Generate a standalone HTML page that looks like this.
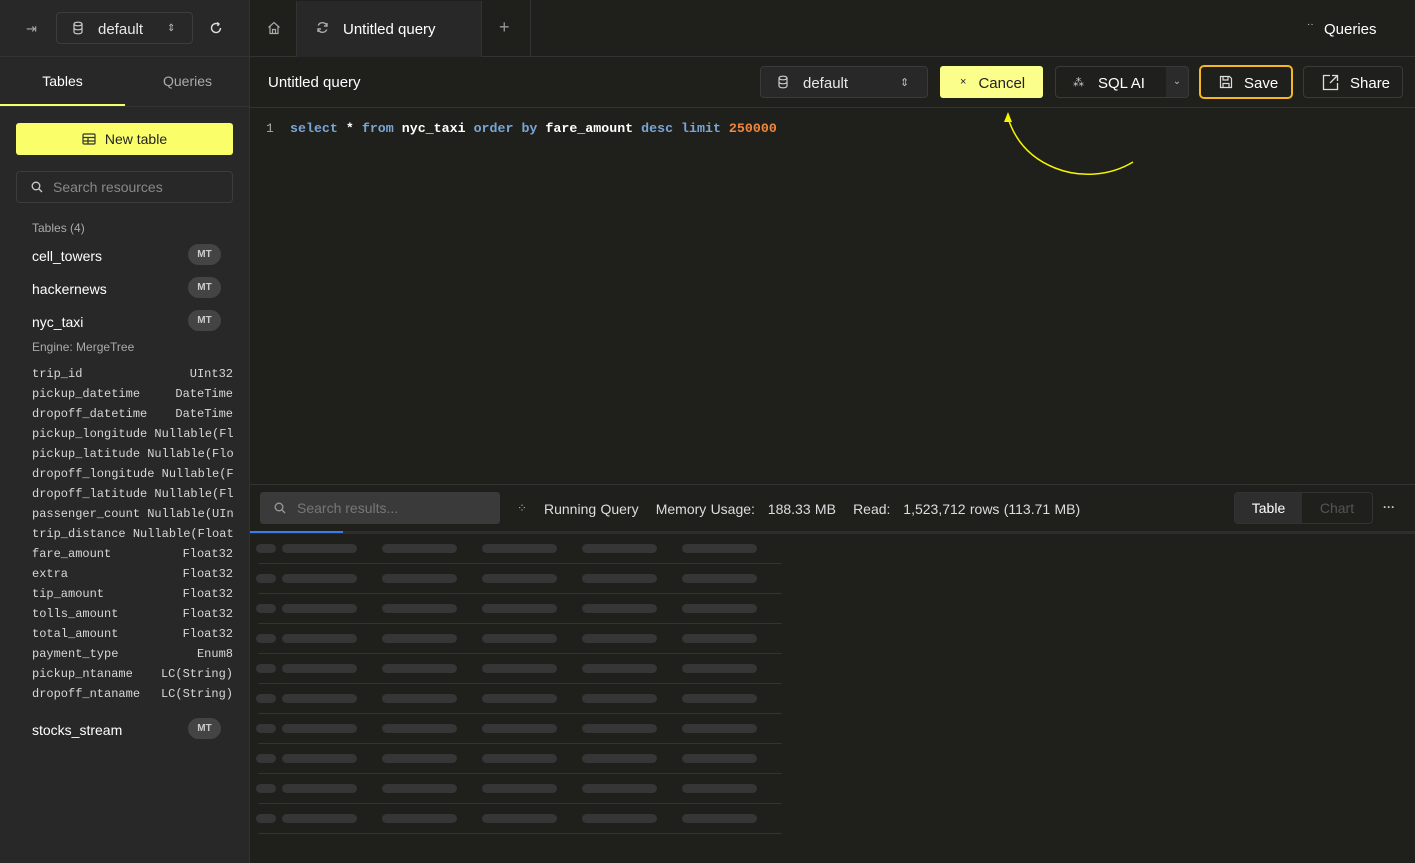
<!DOCTYPE html>
<html><head><meta charset="utf-8"><style>
*{box-sizing:border-box;margin:0;padding:0}
body{width:1415px;height:863px;background:#1f1f1c;font-family:"Liberation Sans",sans-serif;color:#e8e8e8;position:relative;overflow:hidden;font-size:14px}
.abs{position:absolute}
.side{left:0;top:0;width:250px;height:863px;background:#282828;border-right:1px solid #333}
.mono{font-family:"Liberation Mono",monospace}
.btn{position:absolute;border:1px solid #3a3a3a;border-radius:4px;display:flex;align-items:center;font-size:14px}
.badge{position:absolute;left:188px;width:33px;height:21px;border-radius:11px;background:#444;color:#ccc;font-size:10px;font-weight:bold;text-align:center;line-height:21px}
.col{position:absolute;left:32px;width:201px;font-size:12px;color:#d8d8d8;display:flex;justify-content:space-between;white-space:nowrap;overflow:hidden}
.sk{position:absolute;height:9px;border-radius:5px;background:#363636}
.sep{position:absolute;left:258px;width:524px;height:1px;background:#333}
</style></head><body>
<div class="abs side">
  <div class="abs" style="left:26px;top:21px;color:#aaa;font-size:13px">⇥</div>
  <div class="btn" style="left:56px;top:12px;width:137px;height:32px;border-color:#3c3c3c">
    <svg style="margin-left:15px" width="12" height="14" viewBox="0 0 12 14" fill="none" stroke="#ccc" stroke-width="1.2"><ellipse cx="6" cy="3" rx="4" ry="1.8"/><path d="M2 3v8c0 1 1.8 1.8 4 1.8s4-.8 4-1.8V3M2 7c0 1 1.8 1.8 4 1.8s4-.8 4-1.8"/></svg>
    <span style="margin-left:14px;color:#e8e8e8;font-size:15px;position:relative;top:1px">default</span>
    <span style="margin-left:24px;color:#bbb;font-size:10px">⇕</span>
  </div>
  <svg class="abs" style="left:209px;top:21px" width="14" height="14" viewBox="0 0 14 14" fill="none" stroke="#ddd" stroke-width="1.4"><path d="M11.5 7A4.5 4.5 0 1 1 9 3"/><path d="M8 1.5l2 1.5-1.5 2"/></svg>
  <div class="abs" style="left:0;top:56px;width:250px;height:1px;background:#333"></div>
  <div class="abs" style="left:0;top:73px;width:125px;text-align:center;font-size:14px;color:#fff">Tables</div>
  <div class="abs" style="left:125px;top:73px;width:125px;text-align:center;font-size:14px;color:#aaa">Queries</div>
  <div class="abs" style="left:0;top:104px;width:125px;height:2px;background:#faff69"></div>
  <div class="abs" style="left:0;top:106px;width:250px;height:1px;background:#333"></div>
  <div class="abs" style="left:16px;top:123px;width:217px;height:32px;background:#faff69;border-radius:3px;color:#222;display:flex;align-items:center;justify-content:center;font-size:14px">
    <svg width="14" height="12" viewBox="0 0 14 12" fill="none" stroke="#333" stroke-width="1.2" style="margin-right:9px"><rect x="1" y="1" width="12" height="10" rx="1"/><path d="M1 4.5h12M1 8h12M6 4.5V11"/></svg>New table</div>
  <div class="btn" style="left:16px;top:171px;width:217px;height:32px;border-color:#3c3c3c">
    <svg style="margin-left:14px" width="12" height="12" viewBox="0 0 12 12" fill="none" stroke="#ccc" stroke-width="1.3"><circle cx="5" cy="5" r="3.8"/><path d="M8 8l3 3"/></svg>
    <span style="margin-left:10px;color:#888">Search resources</span></div>
  <div class="abs" style="left:32px;top:221px;font-size:12px;color:#aaa">Tables (4)</div>
  <div class="abs" style="left:32px;top:248px;font-size:14px;color:#fff">cell_towers</div><div class="badge" style="top:244px">MT</div>
  <div class="abs" style="left:32px;top:281px;font-size:14px;color:#fff">hackernews</div><div class="badge" style="top:277px">MT</div>
  <div class="abs" style="left:32px;top:314px;font-size:14px;color:#fff">nyc_taxi</div><div class="badge" style="top:310px">MT</div>
  <div class="abs" style="left:32px;top:340px;font-size:12px;color:#aaa">Engine: MergeTree</div>
  <div class="mono">
  <div class="col" style="top:367px"><span>trip_id</span><span>UInt32</span></div>
  <div class="col" style="top:387px"><span>pickup_datetime</span><span>DateTime</span></div>
  <div class="col" style="top:407px"><span>dropoff_datetime</span><span>DateTime</span></div>
  <div class="col" style="top:427px"><span>pickup_longitude</span><span>&nbsp;Nullable(Fl</span></div>
  <div class="col" style="top:447px"><span>pickup_latitude</span><span>&nbsp;Nullable(Flo</span></div>
  <div class="col" style="top:467px"><span>dropoff_longitude</span><span>&nbsp;Nullable(F</span></div>
  <div class="col" style="top:487px"><span>dropoff_latitude</span><span>&nbsp;Nullable(Fl</span></div>
  <div class="col" style="top:507px"><span>passenger_count</span><span>&nbsp;Nullable(UIn</span></div>
  <div class="col" style="top:527px"><span>trip_distance</span><span>&nbsp;Nullable(Float</span></div>
  <div class="col" style="top:547px"><span>fare_amount</span><span>Float32</span></div>
  <div class="col" style="top:567px"><span>extra</span><span>Float32</span></div>
  <div class="col" style="top:587px"><span>tip_amount</span><span>Float32</span></div>
  <div class="col" style="top:607px"><span>tolls_amount</span><span>Float32</span></div>
  <div class="col" style="top:627px"><span>total_amount</span><span>Float32</span></div>
  <div class="col" style="top:647px"><span>payment_type</span><span>Enum8</span></div>
  <div class="col" style="top:667px"><span>pickup_ntaname</span><span>LC(String)</span></div>
  <div class="col" style="top:687px"><span>dropoff_ntaname</span><span>LC(String)</span></div>
  </div>
  <div class="abs" style="left:32px;top:722px;font-size:14px;color:#fff">stocks_stream</div><div class="badge" style="top:718px">MT</div>
</div>
<div class="abs" style="left:250px;top:0;width:1165px;height:57px;border-bottom:1px solid #333"></div>
<svg class="abs" style="left:267px;top:21px" width="14" height="14" viewBox="0 0 14 14" fill="none" stroke="#aaa" stroke-width="1.2"><path d="M1.5 6.5L7 1.5l5.5 5M3 5.5V12.5h8V5.5M5.5 12.5V8.5h3v4"/></svg>
<div class="abs" style="left:296px;top:1px;width:186px;height:56px;background:#282828;border-left:1px solid #333;border-right:1px solid #333"></div>
<svg class="abs" style="left:316px;top:21px" width="13" height="13" viewBox="0 0 13 13" fill="none" stroke="#aaa" stroke-width="1.4"><path d="M11 5A4.7 4.7 0 0 0 2.2 4.5M2 8a4.7 4.7 0 0 0 8.8.5"/><path d="M11 2v3H8M2 11V8h3"/></svg>
<div class="abs" style="left:343px;top:21px;font-size:15px;color:#fff">Untitled query</div>
<div class="abs" style="left:499px;top:17px;font-size:18px;color:#999">+</div>
<div class="abs" style="left:530px;top:0;width:1px;height:57px;background:#333"></div>
<div class="abs" style="left:1307px;top:19px;font-size:10px;color:#ccc">··</div>
<div class="abs" style="left:1324px;top:21px;font-size:15px;color:#fff">Queries</div>
<div class="abs" style="left:268px;top:74px;font-size:15px;color:#fff">Untitled query</div>
<div class="btn" style="left:760px;top:66px;width:168px;height:32px;background:#282828">
  <svg style="margin-left:16px" width="12" height="14" viewBox="0 0 12 14" fill="none" stroke="#ccc" stroke-width="1.2"><ellipse cx="6" cy="3" rx="4" ry="1.8"/><path d="M2 3v8c0 1 1.8 1.8 4 1.8s4-.8 4-1.8V3M2 7c0 1 1.8 1.8 4 1.8s4-.8 4-1.8"/></svg>
  <span style="margin-left:14px;font-size:15px;position:relative;top:1px">default</span><span style="margin-left:52px;color:#bbb;font-size:11px">⇕</span></div>
<div class="abs" style="left:940px;top:66px;width:103px;height:32px;background:#fbfe8a;border-radius:3px;color:#222;font-size:15px;display:flex;align-items:center"><span style="margin-left:20px;font-size:11px">×</span><span style="margin-left:12px;position:relative;top:1px">Cancel</span></div>
<div class="btn" style="left:1055px;top:66px;width:134px;height:32px;overflow:hidden">
  <span style="margin-left:17px;font-size:11px;color:#ccc">⁂</span><span style="margin-left:14px;font-size:15px;color:#fff;position:relative;top:1px">SQL AI</span>
  <div style="position:absolute;right:0;top:0;width:22px;height:32px;background:#2b2b2b;color:#bbb;font-size:10px;text-align:center;line-height:30px">⌄</div></div>
<div class="btn" style="left:1199px;top:65px;width:94px;height:34px;border:2px solid #f5b623;border-radius:5px">
  <svg style="margin-left:18px" width="14" height="14" viewBox="0 0 14 14" fill="none" stroke="#ddd" stroke-width="1.2"><path d="M1.5 1.5h9l2 2v9h-11z"/><path d="M4 1.5v3.5h5V1.5M4 12.5V8.5h6v4"/></svg>
  <span style="margin-left:11px;font-size:15px;color:#fff;position:relative;top:1px">Save</span></div>
<div class="btn" style="left:1303px;top:66px;width:100px;height:32px">
  <svg style="margin-left:18px" width="17" height="17" viewBox="0 0 17 17" fill="none" stroke="#ddd" stroke-width="1.3"><path d="M8 1.5H1.5v14h14V9M10 1.5h5.5V7M15.5 1.5L8 9"/></svg>
  <span style="margin-left:11px;font-size:15px;color:#fff;position:relative;top:1px">Share</span></div>
<div class="abs" style="left:250px;top:107px;width:1165px;height:1px;background:#333"></div>
<div class="abs mono" style="left:266px;top:121px;font-size:13px;color:#aaa">1</div>
<div class="abs mono" style="left:290px;top:121px;font-size:13.3px;white-space:pre;font-weight:bold"><span style="color:#7aa6d6">select</span><span style="color:#fff"> * </span><span style="color:#7aa6d6">from</span><span style="color:#fff"> nyc_taxi </span><span style="color:#7aa6d6">order by</span><span style="color:#fff"> fare_amount </span><span style="color:#7aa6d6">desc limit</span> <span style="color:#f0883e">250000</span></div>
<svg class="abs" style="left:1000px;top:110px" width="140" height="70" viewBox="0 0 140 70" fill="none"><path d="M133 52C110 66 80 68 55 58C30 48 15 30 8 8" stroke="#f5f500" stroke-width="1.5"/><path d="M4 12L8 2L12 12z" fill="#f5f500"/></svg>
<div class="abs" style="left:250px;top:484px;width:1165px;height:1px;background:#333"></div>
<div class="abs" style="left:260px;top:492px;width:240px;height:32px;background:#3a3a3a;border-radius:3px;display:flex;align-items:center">
  <svg style="margin-left:14px" width="12" height="12" viewBox="0 0 12 12" fill="none" stroke="#999" stroke-width="1.3"><circle cx="5" cy="5" r="3.8"/><path d="M8 8l3 3"/></svg><span style="margin-left:11px;color:#777;font-size:14px">Search results...</span></div>
<div class="abs" style="left:517px;top:501px;color:#aaa;font-size:12px">⁘</div>
<div class="abs" style="left:544px;top:501px;font-size:14px;color:#ddd;white-space:pre;word-spacing:0.4px">Running Query    Memory Usage:   188.33 MB    Read:   1,523,712 rows (113.71 MB)</div>
<div class="abs" style="left:1234px;top:492px;width:139px;height:32px;border:1px solid #333;border-radius:4px;background:#1f1f1c"></div>
<div class="abs" style="left:1235px;top:493px;width:67px;height:30px;background:#2e2e2e;border-radius:3px 0 0 3px;text-align:center;line-height:31px;color:#fff;font-size:14px">Table</div>
<div class="abs" style="left:1302px;top:493px;width:70px;line-height:31px;text-align:center;color:#555;font-size:14px">Chart</div>
<div class="abs" style="left:1383px;top:500px;color:#ccc;font-size:12px;font-weight:bold">···</div>
<div class="abs" style="left:250px;top:531px;width:1165px;height:3px;background:#2e2e2e"></div>
<div class="abs" style="left:250px;top:531px;width:93px;height:2px;background:#3b7ce8"></div>
<div id="sk"></div>
<script>
var h='';for(var i=0;i<10;i++){var y=544+i*30;
h+='<div class="sk" style="left:256px;top:'+y+'px;width:20px"></div>';
[282,382,482,582,682].forEach(function(x){h+='<div class="sk" style="left:'+x+'px;top:'+y+'px;width:75px"></div>'});
h+='<div class="sep" style="top:'+(y+19)+'px"></div>';}
document.getElementById('sk').innerHTML=h;
</script>
</body></html>
